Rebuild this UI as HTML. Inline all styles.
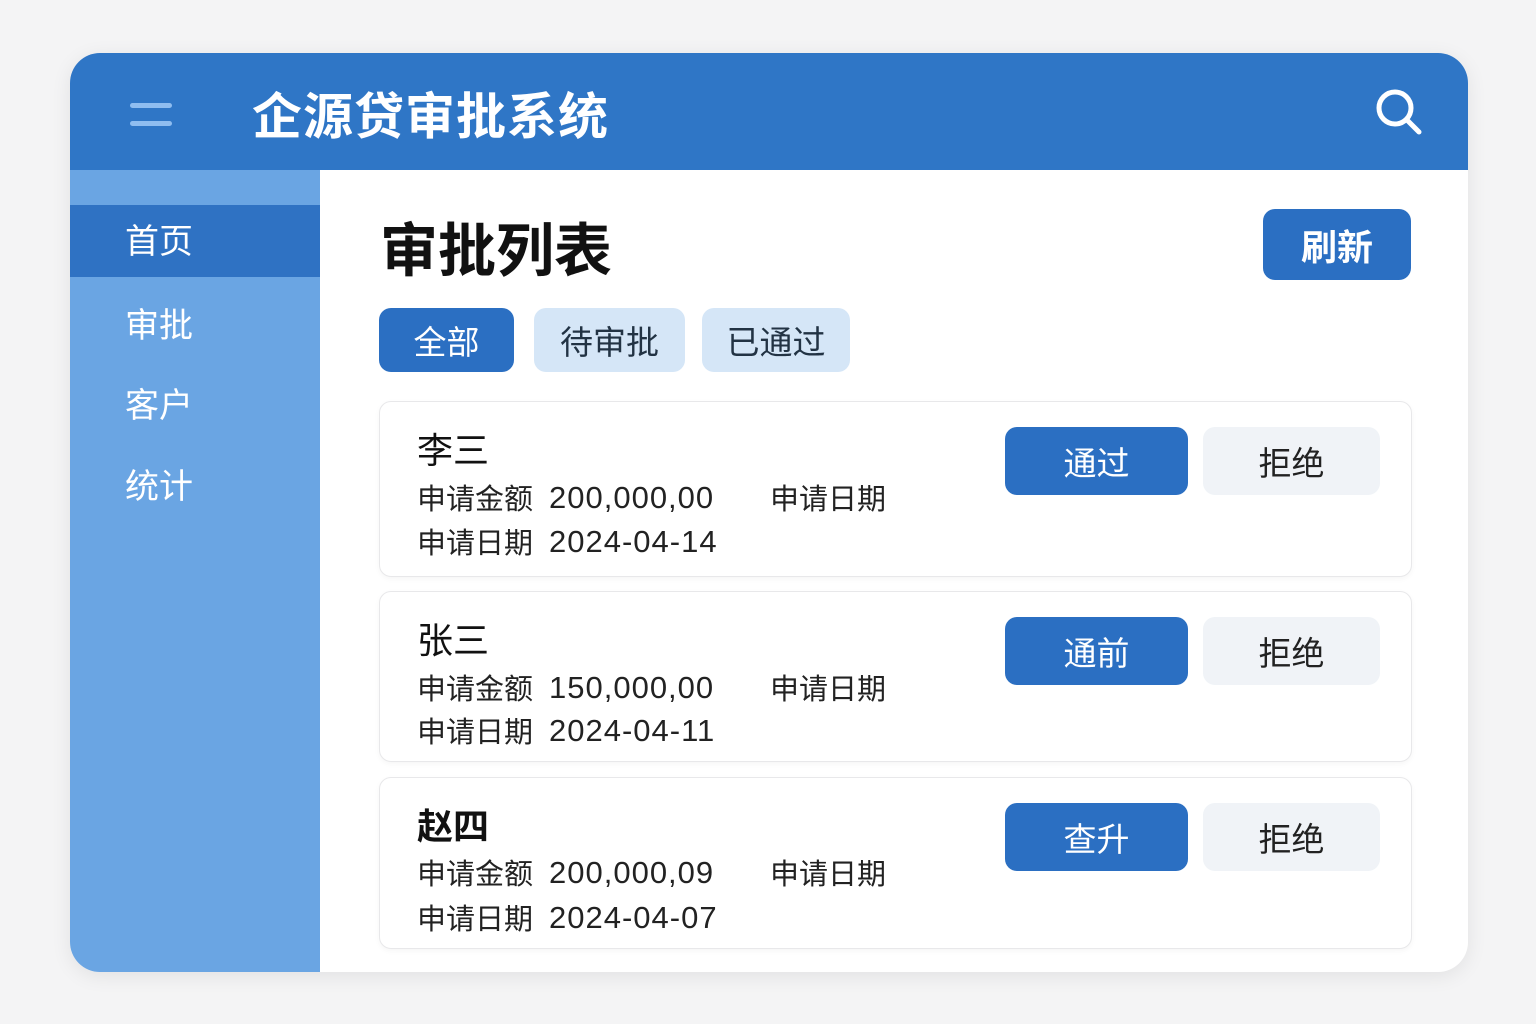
<!DOCTYPE html>
<html><head><meta charset="utf-8"><style>
*{margin:0;padding:0;box-sizing:border-box}
body{width:1536px;height:1024px;background:#f4f4f5;font-family:"Liberation Sans","Noto Sans CJK SC",sans-serif;position:relative;overflow:hidden}
.app{position:absolute;left:70px;top:53px;width:1398px;height:919px;border-radius:30px;overflow:hidden;background:#fff;box-shadow:0 4px 20px rgba(0,0,0,.08)}
.hdr{position:absolute;left:0;top:0;width:100%;height:117px;background:#2f76c6}
.ham{position:absolute;left:60px;width:42px;height:5px;border-radius:3px;background:#8fbdf0}
.title{position:absolute;left:182px;top:24px;color:#fff;font-size:50px;font-weight:bold;letter-spacing:1px}
.side{position:absolute;left:0;top:117px;width:250px;height:802px;background:#6aa5e3}
.side .lbl{position:absolute;left:55px;color:#fff;font-size:34px}
.act{position:absolute;left:0;top:35px;width:250px;height:72px;background:#2f72c3}
.abs{position:absolute}
.btn{position:absolute;border-radius:12px;display:flex;align-items:center;justify-content:center;font-size:33px}
.card{position:absolute;left:309px;width:1033px;background:#fff;border:1px solid #e8e8ea;border-radius:12px;box-shadow:0 2px 6px rgba(0,0,0,.04)}
.nm{position:absolute;left:37px;top:20px;font-size:36px;color:#111}
.row{position:absolute;left:37px;font-size:29px;color:#222;white-space:nowrap;height:40px;width:560px}
.row span{position:absolute;top:0}
.row .v{left:132px;font-size:31px;top:4px;letter-spacing:1px}
.row .d{left:353px}
.ok{left:625px;top:25px;width:183px;height:68px;background:#2b6fc2;color:#fff}
.no{left:823px;top:25px;width:177px;height:68px;background:#f0f3f7;color:#222}
</style></head><body>
<div class="app">
<div class="hdr">
<div class="ham" style="top:50px"></div><div class="ham" style="top:68px"></div>
<div class="title">企源贷审批系统</div>
<svg class="abs" style="left:1303px;top:33px" width="50" height="50" viewBox="0 0 50 50"><circle cx="22" cy="22" r="16" fill="none" stroke="#fff" stroke-width="5"/><line x1="34" y1="34" x2="46" y2="46" stroke="#fff" stroke-width="5" stroke-linecap="round"/></svg>
</div>
<div class="side">
<div class="act"></div>
<div class="lbl" style="top:44px">首页</div>
<div class="lbl" style="top:128px">审批</div>
<div class="lbl" style="top:208px">客户</div>
<div class="lbl" style="top:289px">统计</div>
</div>
<div class="abs" style="left:310px;top:151px;font-size:58px;font-weight:bold;color:#111">审批列表</div>
<div class="btn" style="left:1193px;top:156px;width:148px;height:71px;background:#2b6fc2;color:#fff;font-weight:bold;font-size:36px">刷新</div>
<div class="btn" style="left:309px;top:255px;width:135px;height:64px;background:#2b6fc2;color:#fff">全部</div>
<div class="btn" style="left:464px;top:255px;width:151px;height:64px;background:#d5e6f7;color:#234">待审批</div>
<div class="btn" style="left:632px;top:255px;width:148px;height:64px;background:#d5e6f7;color:#234">已通过</div>

<div class="card" style="top:348px;height:176px">
<div class="nm">李三</div>
<div class="row" style="top:74px"><span>申请金额</span><span class="v">200,000,00</span><span class="d">申请日期</span></div>
<div class="row" style="top:118px"><span>申请日期</span><span class="v">2024-04-14</span></div>
<div class="btn ok">通过</div><div class="btn no">拒绝</div>
</div>
<div class="card" style="top:538px;height:171px">
<div class="nm">张三</div>
<div class="row" style="top:74px"><span>申请金额</span><span class="v">150,000,00</span><span class="d">申请日期</span></div>
<div class="row" style="top:117px"><span>申请日期</span><span class="v">2024-04-11</span></div>
<div class="btn ok">通前</div><div class="btn no">拒绝</div>
</div>
<div class="card" style="top:724px;height:172px">
<div class="nm" style="font-weight:bold">赵四</div>
<div class="row" style="top:73px"><span>申请金额</span><span class="v">200,000,09</span><span class="d">申请日期</span></div>
<div class="row" style="top:118px"><span>申请日期</span><span class="v">2024-04-07</span></div>
<div class="btn ok">查升</div><div class="btn no">拒绝</div>
</div>
</div>
</body></html>
